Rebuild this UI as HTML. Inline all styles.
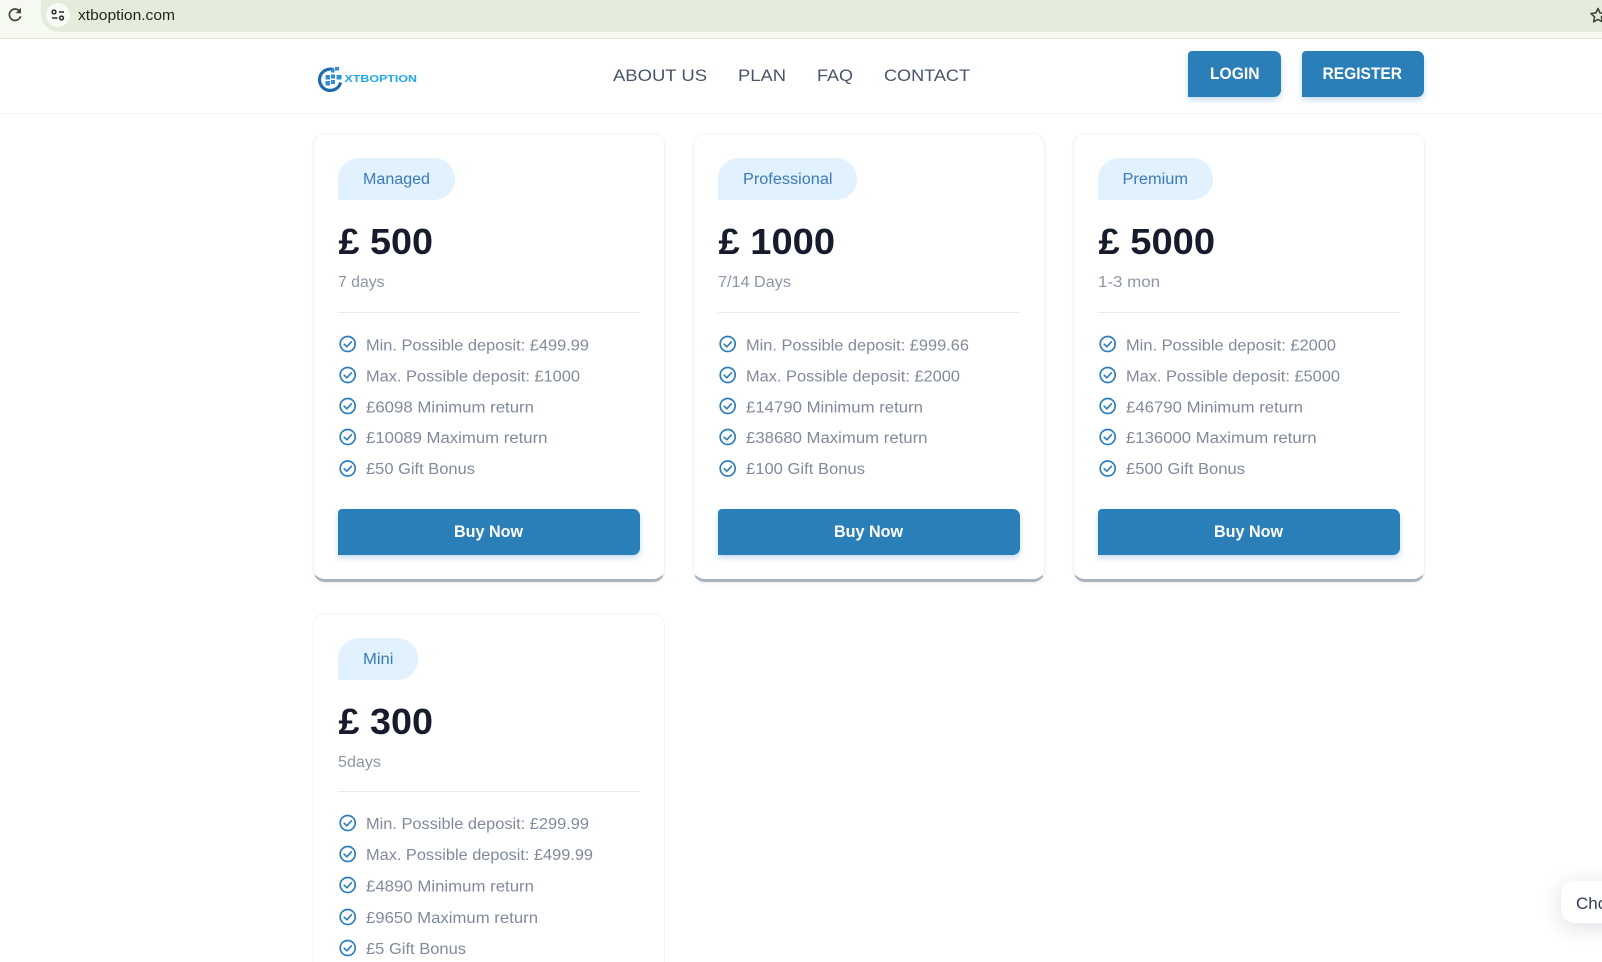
<!DOCTYPE html>
<html lang="en"><head><meta charset="utf-8"><title>XTBOPTION Plans</title>
<style>
html,body{margin:0;padding:0;background:#fff;width:1602px;height:962px;overflow:hidden;font-family:"Liberation Sans",sans-serif}
.a{position:absolute;box-sizing:border-box}
.card{width:352px;background:#fff;border:1px solid #f3f4f5;border-radius:12px}
.card.full{height:449px;border-bottom:3px solid #a9b3bd;box-shadow:0 2px 3px rgba(0,0,0,.05)}
.card.cut{border-bottom:0;border-bottom-left-radius:0;border-bottom-right-radius:0}
.pill{height:42px;background:#e1f1fd;border-radius:21px 21px 21px 0}
.btn{background:#2a7fb9;border-radius:4px 7px 7px 0;box-shadow:0 3px 6px rgba(42,127,185,.28)}
svg{position:absolute;left:0;top:0}
text{font-family:"Liberation Sans",sans-serif}
.li{font-size:15.5px;fill:#808a9b}
.pr{font-size:36px;font-weight:700;fill:#161c2d}
.sb{font-size:15.5px;fill:#8d96a6}
.pl{font-size:15.5px;fill:#3c7ab9}
.bn{font-size:16.5px;font-weight:700;fill:#fff}
.nv{font-size:17px;fill:#47556a}
.au{font-size:17px;font-weight:700;fill:#fff}
</style></head><body>
<div class="a" style="left:0;top:0;width:1602px;height:38px;background:#f6f9f1"></div>
<div class="a" style="left:0;top:38px;width:1602px;height:1px;background:#e3e3d6"></div>
<div class="a" style="left:41px;top:0;width:1561px;height:32px;background:#e4ecdb;border-radius:0 0 0 18px"></div>
<div class="a" style="left:46px;top:3px;width:24px;height:24px;border-radius:50%;background:#f8faf4"></div>
<div class="a" style="left:0;top:113px;width:1602px;height:1px;background:#f2f3f5"></div>

<div class="a btn" style="left:1188px;top:51px;width:93px;height:46px"></div>
<div class="a btn" style="left:1302px;top:51px;width:122px;height:46px"></div>

<div class="a card full" style="left:313px;top:133px"></div>
<div class="a card full" style="left:693px;top:133px"></div>
<div class="a card full" style="left:1073px;top:133px"></div>
<div class="a card cut" style="left:313px;top:613px;height:349px"></div>

<div class="a pill" style="left:338px;top:158px;width:117px"></div>
<div class="a pill" style="left:718px;top:158px;width:139px"></div>
<div class="a pill" style="left:1098px;top:158px;width:115px"></div>
<div class="a pill" style="left:338px;top:638px;width:80px"></div>

<div class="a" style="left:338px;top:312px;width:302px;height:1px;background:#e9ebee"></div>
<div class="a" style="left:718px;top:312px;width:302px;height:1px;background:#e9ebee"></div>
<div class="a" style="left:1098px;top:312px;width:302px;height:1px;background:#e9ebee"></div>
<div class="a" style="left:338px;top:791px;width:302px;height:1px;background:#e9ebee"></div>

<div class="a btn" style="left:338px;top:509px;width:302px;height:46px"></div>
<div class="a btn" style="left:718px;top:509px;width:302px;height:46px"></div>
<div class="a btn" style="left:1098px;top:509px;width:302px;height:46px"></div>

<div class="a" style="left:1561px;top:881px;width:70px;height:42px;background:#fff;border-radius:14px;box-shadow:0 4px 22px rgba(40,50,80,.16)"></div>

<svg width="1602" height="962" viewBox="0 0 1602 962" xmlns="http://www.w3.org/2000/svg">
<defs>
<g id="ck" fill="none" stroke="#2b7dbd"><circle r="7.5" stroke-width="1.7"/><path d="M-3.5 .2 L-.9 2.8 L3.6 -2.1" stroke-width="1.6" stroke-linecap="round" stroke-linejoin="round"/></g>
</defs>

<!-- browser chrome -->
<g fill="none" stroke="#3d4639" stroke-width="1.7">
<path d="M20.2 12.2 A5.7 5.7 0 1 0 20.6 16.2"/>
</g>
<path d="M21 7.8 V13.2 H15.6 Z" fill="#3d4639"/>
<g fill="none" stroke="#2b2f2b" stroke-width="1.5">
<circle cx="54" cy="12" r="1.9"/><path d="M59 12 H64"/>
<circle cx="61.5" cy="18" r="1.9"/><path d="M52 18 H57.5"/>
</g>
<text x="78" y="20" font-size="15" fill="#1f2420" textLength="97" lengthAdjust="spacingAndGlyphs">xtboption.com</text>
<path d="M1598 8.5 L1600.1 13 L1605 13.6 L1601.4 17 L1602.4 21.8 L1598 19.4 L1593.6 21.8 L1594.6 17 L1591 13.6 L1595.9 13 Z" fill="none" stroke="#3d4639" stroke-width="1.6" stroke-linejoin="round"/>

<!-- logo -->
<path d="M333.5 69.6 A10.7 10.7 0 1 0 340.6 82.5" fill="none" stroke="#2269b3" stroke-width="3.2"/>
<g fill="#2b8fd6">
<rect x="325.5" y="75" width="4.5" height="4.5"/><rect x="331" y="74.5" width="4" height="4"/>
<rect x="325.5" y="81" width="4.5" height="4.5"/><rect x="331" y="80" width="4" height="4"/>
<rect x="336.5" y="75" width="5" height="4.5"/><rect x="331" y="69" width="3.5" height="3.5"/><rect x="335" y="67" width="4" height="3.5"/>
</g>
<text x="344.5" y="82" font-size="10.5" font-weight="700" fill="#1fa8ea" textLength="72.5" lengthAdjust="spacingAndGlyphs">XTBOPTION</text>

<!-- nav -->
<text class="nv" x="613" y="81" textLength="94" lengthAdjust="spacingAndGlyphs">ABOUT US</text>
<text class="nv" x="738" y="81" textLength="48" lengthAdjust="spacingAndGlyphs">PLAN</text>
<text class="nv" x="817" y="81" textLength="36" lengthAdjust="spacingAndGlyphs">FAQ</text>
<text class="nv" x="884" y="81" textLength="86" lengthAdjust="spacingAndGlyphs">CONTACT</text>
<text class="au" x="1210" y="79" textLength="49.5" lengthAdjust="spacingAndGlyphs">LOGIN</text>
<text class="au" x="1322.5" y="79" textLength="79.5" lengthAdjust="spacingAndGlyphs">REGISTER</text>

<!-- card 1 -->
<text class="pl" x="363" y="184" textLength="67" lengthAdjust="spacingAndGlyphs">Managed</text>
<text class="pr" x="338.5" y="254" textLength="94.5" lengthAdjust="spacingAndGlyphs">£ 500</text>
<text class="sb" x="338" y="287" textLength="46.5" lengthAdjust="spacingAndGlyphs">7 days</text>
<use href="#ck" x="347.7" y="344"/><use href="#ck" x="347.7" y="375"/><use href="#ck" x="347.7" y="406"/><use href="#ck" x="347.7" y="437"/><use href="#ck" x="347.7" y="468.5"/>
<text class="li" x="366" y="350.3" textLength="223" lengthAdjust="spacingAndGlyphs">Min. Possible deposit: £499.99</text>
<text class="li" x="366" y="381.3" textLength="214" lengthAdjust="spacingAndGlyphs">Max. Possible deposit: £1000</text>
<text class="li" x="366" y="412.3" textLength="168" lengthAdjust="spacingAndGlyphs">£6098 Minimum return</text>
<text class="li" x="366" y="443.1" textLength="181.5" lengthAdjust="spacingAndGlyphs">£10089 Maximum return</text>
<text class="li" x="366" y="474.1" textLength="109" lengthAdjust="spacingAndGlyphs">£50 Gift Bonus</text>
<text class="bn" x="454" y="537" textLength="69" lengthAdjust="spacingAndGlyphs">Buy Now</text>

<!-- card 2 -->
<text class="pl" x="743" y="184" textLength="89.5" lengthAdjust="spacingAndGlyphs">Professional</text>
<text class="pr" x="718.5" y="254" textLength="116.5" lengthAdjust="spacingAndGlyphs">£ 1000</text>
<text class="sb" x="718" y="287" textLength="73" lengthAdjust="spacingAndGlyphs">7/14 Days</text>
<use href="#ck" x="727.7" y="344"/><use href="#ck" x="727.7" y="375"/><use href="#ck" x="727.7" y="406"/><use href="#ck" x="727.7" y="437"/><use href="#ck" x="727.7" y="468.5"/>
<text class="li" x="746" y="350.3" textLength="223" lengthAdjust="spacingAndGlyphs">Min. Possible deposit: £999.66</text>
<text class="li" x="746" y="381.3" textLength="214" lengthAdjust="spacingAndGlyphs">Max. Possible deposit: £2000</text>
<text class="li" x="746" y="412.3" textLength="177" lengthAdjust="spacingAndGlyphs">£14790 Minimum return</text>
<text class="li" x="746" y="443.1" textLength="181.5" lengthAdjust="spacingAndGlyphs">£38680 Maximum return</text>
<text class="li" x="746" y="474.1" textLength="119" lengthAdjust="spacingAndGlyphs">£100 Gift Bonus</text>
<text class="bn" x="834" y="537" textLength="69" lengthAdjust="spacingAndGlyphs">Buy Now</text>

<!-- card 3 -->
<text class="pl" x="1122.5" y="184" textLength="65.5" lengthAdjust="spacingAndGlyphs">Premium</text>
<text class="pr" x="1098.5" y="254" textLength="116.5" lengthAdjust="spacingAndGlyphs">£ 5000</text>
<text class="sb" x="1098" y="287" textLength="62" lengthAdjust="spacingAndGlyphs">1-3 mon</text>
<use href="#ck" x="1107.7" y="344"/><use href="#ck" x="1107.7" y="375"/><use href="#ck" x="1107.7" y="406"/><use href="#ck" x="1107.7" y="437"/><use href="#ck" x="1107.7" y="468.5"/>
<text class="li" x="1126" y="350.3" textLength="210" lengthAdjust="spacingAndGlyphs">Min. Possible deposit: £2000</text>
<text class="li" x="1126" y="381.3" textLength="214" lengthAdjust="spacingAndGlyphs">Max. Possible deposit: £5000</text>
<text class="li" x="1126" y="412.3" textLength="177" lengthAdjust="spacingAndGlyphs">£46790 Minimum return</text>
<text class="li" x="1126" y="443.1" textLength="190.5" lengthAdjust="spacingAndGlyphs">£136000 Maximum return</text>
<text class="li" x="1126" y="474.1" textLength="119" lengthAdjust="spacingAndGlyphs">£500 Gift Bonus</text>
<text class="bn" x="1214" y="537" textLength="69" lengthAdjust="spacingAndGlyphs">Buy Now</text>

<!-- card 4 -->
<text class="pl" x="363" y="664" textLength="30.5" lengthAdjust="spacingAndGlyphs">Mini</text>
<text class="pr" x="338.5" y="734" textLength="94.5" lengthAdjust="spacingAndGlyphs">£ 300</text>
<text class="sb" x="338" y="767" textLength="43" lengthAdjust="spacingAndGlyphs">5days</text>
<use href="#ck" x="347.7" y="823"/><use href="#ck" x="347.7" y="854"/><use href="#ck" x="347.7" y="885"/><use href="#ck" x="347.7" y="917"/><use href="#ck" x="347.7" y="948"/>
<text class="li" x="366" y="828.9" textLength="223" lengthAdjust="spacingAndGlyphs">Min. Possible deposit: £299.99</text>
<text class="li" x="366" y="859.9" textLength="227" lengthAdjust="spacingAndGlyphs">Max. Possible deposit: £499.99</text>
<text class="li" x="366" y="891.3" textLength="168" lengthAdjust="spacingAndGlyphs">£4890 Minimum return</text>
<text class="li" x="366" y="922.9" textLength="172" lengthAdjust="spacingAndGlyphs">£9650 Maximum return</text>
<text class="li" x="366" y="953.9" textLength="100" lengthAdjust="spacingAndGlyphs">£5 Gift Bonus</text>

<!-- chat -->
<text x="1576" y="909" font-size="17" fill="#333c55">Choose</text>
</svg>
</body></html>
